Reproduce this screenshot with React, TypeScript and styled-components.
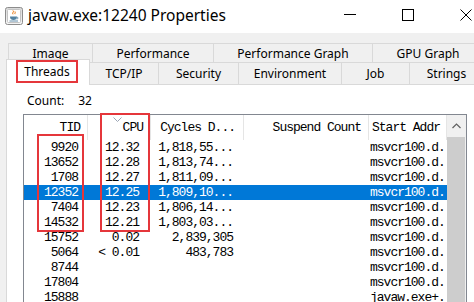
import React from "react";
import styled, { createGlobalStyle, css } from "styled-components";

const Global = createGlobalStyle`
  html, body { margin: 0; padding: 0; background: #f0f0f0; overflow: hidden; }
  body { width: 474px; height: 302px; }
`;

const Window = styled.div`
  width: 474px;
  height: 302px;
  overflow: hidden;
  background: #f0f0f0;
  font-family: "Noto Sans", "Open Sans", sans-serif;
  color: #000;
  display: flex;
  flex-direction: column;
`;

const TitleBar = styled.div`
  height: 33px;
  flex-shrink: 0;
  background: #fff;
  display: flex;
  align-items: flex-start;
`;

const AppIcon = styled.svg`
  width: 18px;
  height: 18px;
  margin: 7px 0 0 5px;
  flex-shrink: 0;
`;

const Title = styled.div`
  flex: 1;
  margin-left: 5px;
  font-size: 15.5px;
  line-height: 30px;
  white-space: nowrap;
`;

const Controls = styled.div`
  display: flex;
  flex-shrink: 0;
  margin-right: -21px;
`;

const ControlButton = styled.div`
  width: 58px;
  height: 30px;
  display: flex;
  align-items: center;
  justify-content: center;
`;

const TabArea = styled.div`
  padding-top: 10px;
  display: flex;
  flex-direction: column;
  width: 500px;
  flex-shrink: 0;
`;

const TabRow = styled.div<{ $h: number; $indent: number }>`
  display: flex;
  height: ${(p) => p.$h}px;
  padding-left: ${(p) => p.$indent}px;
`;

const Tab = styled.div<{ $w: number; $active?: boolean }>`
  width: ${(p) => p.$w}px;
  flex-shrink: 0;
  box-sizing: border-box;
  border: 1px solid #d9d9d9;
  border-bottom: none;
  margin-right: -1px;
  background: #f0f0f0;
  display: flex;
  align-items: center;
  justify-content: center;
  font-size: 12px;
  white-space: nowrap;
  ${(p) =>
    p.$active &&
    css`
      background: #fff;
      margin-top: -3px;
      margin-bottom: -1px;
      z-index: 2;
      align-items: flex-start;
      padding-right: 2px;
    `}
`;

const MarkedLabel = styled.span`
  box-sizing: border-box;
  width: 62px;
  height: 23px;
  border: 2px solid #e5363b;
  display: flex;
  align-items: center;
  justify-content: center;
`;

const Panel = styled.div`
  flex: 1;
  margin-left: 6px;
  background: #fff;
  border-top: 1px solid #d9d9d9;
  border-left: 1px solid #d9d9d9;
  display: flex;
  flex-direction: column;
  width: 480px;
`;

const CountRow = styled.div`
  margin: 8px 0 0 20px;
  height: 16px;
  line-height: 16px;
  font-size: 12px;
  display: flex;
`;

const CountValue = styled.span`
  margin-left: 14px;
`;

const List = styled.div`
  position: relative;
  margin: 5px 0 0 16px;
  width: 444px;
  box-sizing: border-box;
  flex: 1;
  border: 1px solid #828790;
  border-bottom: none;
  display: flex;
  font-family: "Liberation Mono", "DejaVu Sans Mono", monospace;
  font-size: 13px;
  letter-spacing: -1px;
`;

const Table = styled.div`
  width: 423px;
  display: flex;
  flex-direction: column;
`;

const HeaderRow = styled.div`
  display: flex;
  height: 25px;
`;

type Align = "left" | "right";

const HeaderCell = styled.div<{ $w: number; $align: Align; $pad: number }>`
  position: relative;
  box-sizing: border-box;
  width: ${(p) => p.$w}px;
  flex-shrink: 0;
  border-right: 1px solid #e5e5e5;
  line-height: 25px;
  white-space: nowrap;
  overflow: hidden;
  text-align: ${(p) => p.$align};
  ${(p) =>
    p.$align === "right"
      ? css`padding-right: ${p.$pad}px;`
      : css`padding-left: ${p.$pad}px;`}
`;

const SortMark = styled.svg`
  position: absolute;
  left: 25px;
  top: 2px;
  width: 9px;
  height: 5px;
`;

const Row = styled.div<{ $selected?: boolean }>`
  display: flex;
  height: 15px;
  line-height: 15px;
  background: ${(p) => (p.$selected ? "#0078d7" : "transparent")};
  color: ${(p) => (p.$selected ? "#fff" : "#000")};
`;

const Cell = styled.div<{ $w: number; $align: Align; $pad: number }>`
  box-sizing: border-box;
  width: ${(p) => p.$w}px;
  flex-shrink: 0;
  white-space: nowrap;
  overflow: hidden;
  text-align: ${(p) => p.$align};
  ${(p) =>
    p.$align === "right"
      ? css`padding-right: ${p.$pad}px;`
      : css`padding-left: ${p.$pad}px;`}
`;

const ScrollBar = styled.div`
  width: 19px;
  background: #f0f0f0;
  display: flex;
  flex-direction: column;
`;

const ScrollUp = styled.div`
  height: 22px;
  display: flex;
  align-items: center;
  justify-content: center;
  padding-right: 1px;
`;

const ScrollThumb = styled.div`
  flex: 1;
  background: #cdcdcd;
  margin-right: 1px;
`;

const Highlight = styled.div<{ $l: number; $t: number; $w: number; $h: number }>`
  position: absolute;
  box-sizing: border-box;
  left: ${(p) => p.$l}px;
  top: ${(p) => p.$t}px;
  width: ${(p) => p.$w}px;
  height: ${(p) => p.$h}px;
  border: 2px solid #e5363b;
  pointer-events: none;
  z-index: 3;
`;

type Col = { key: string; label: string; w: number; align: Align; hp: number; cp: number };

const columns: Col[] = [
  { key: "tid", label: "TID", w: 64, align: "right", hp: 7, cp: 10 },
  { key: "cpu", label: "CPU", w: 63, align: "right", hp: 7, cp: 12 },
  { key: "cycles", label: "Cycles D...", w: 93, align: "right", hp: 8, cp: 11 },
  { key: "suspend", label: "Suspend Count", w: 125, align: "right", hp: 7, cp: 11 },
  { key: "start", label: "Start Addr", w: 78, align: "left", hp: 3, cp: 1 },
];

type Thread = { tid: string; cpu: string; cycles: string; suspend: string; start: string; selected?: boolean };

const threads: Thread[] = [
  { tid: "9920", cpu: "12.32", cycles: "1,818,55...", suspend: "", start: "msvcr100.d." },
  { tid: "13652", cpu: "12.28", cycles: "1,813,74...", suspend: "", start: "msvcr100.d." },
  { tid: "1708", cpu: "12.27", cycles: "1,811,09...", suspend: "", start: "msvcr100.d." },
  { tid: "12352", cpu: "12.25", cycles: "1,809,10...", suspend: "", start: "msvcr100.d.", selected: true },
  { tid: "7404", cpu: "12.23", cycles: "1,806,14...", suspend: "", start: "msvcr100.d." },
  { tid: "14532", cpu: "12.21", cycles: "1,803,03...", suspend: "", start: "msvcr100.d." },
  { tid: "15752", cpu: "0.02", cycles: "2,839,305", suspend: "", start: "msvcr100.d." },
  { tid: "5064", cpu: "< 0.01", cycles: "483,783", suspend: "", start: "msvcr100.d." },
  { tid: "8744", cpu: "", cycles: "", suspend: "", start: "msvcr100.d." },
  { tid: "17804", cpu: "", cycles: "", suspend: "", start: "msvcr100.d." },
  { tid: "15888", cpu: "", cycles: "", suspend: "", start: "javaw.exe+." },
];

const topTabs = [
  { label: "Image", w: 85 },
  { label: "Performance", w: 122 },
  { label: "Performance Graph", w: 160 },
  { label: "GPU Graph", w: 112 },
];

const bottomTabs = [
  { label: "Threads", w: 84, active: true },
  { label: "TCP/IP", w: 70 },
  { label: "Security", w: 81 },
  { label: "Environment", w: 104 },
  { label: "Job", w: 69 },
  { label: "Strings", w: 75 },
];

const JavaIcon = () => (
  <AppIcon viewBox="0 0 18 18">
    <defs>
      <linearGradient id="frame" x1="0" y1="0" x2="0" y2="1">
        <stop offset="0" stopColor="#d8d8d8" />
        <stop offset="1" stopColor="#f6f6f6" />
      </linearGradient>
    </defs>
    <rect x="0.5" y="0.5" width="17" height="17" rx="2" fill="url(#frame)" stroke="#8c8c8c" />
    <rect x="2.5" y="2.5" width="13" height="13" rx="1" fill="#fff" stroke="#c4c4c4" />
    <path d="M8 3.5c1.5 1.3-1.3 2.2 0 3.8M10 4.5c1 .9-.8 1.5.2 2.6" stroke="#e76f00" strokeWidth="1" fill="none" />
    <path d="M5 9.5h7c0 2.6-1.4 3.5-3.5 3.5S5 12.1 5 9.5z" fill="#5382a1" />
    <path d="M12 10.2c1.4 0 1.4 1.8-.4 1.8" stroke="#5382a1" strokeWidth="0.9" fill="none" />
    <path d="M4.5 14h8.5" stroke="#5382a1" strokeWidth="0.9" />
  </AppIcon>
);

export default function App() {
  return (
    <>
      <Global />
      <Window>
        <TitleBar>
          <JavaIcon />
          <Title>javaw.exe:12240 Properties</Title>
          <Controls>
            <ControlButton>
              <svg width="12" height="2" viewBox="0 0 12 2">
                <path d="M0 0.5h12" stroke="#000" strokeWidth="1" />
              </svg>
            </ControlButton>
            <ControlButton>
              <svg width="12" height="12" viewBox="0 0 12 12">
                <rect x="0.5" y="0.5" width="11" height="11" fill="none" stroke="#000" strokeWidth="1" />
              </svg>
            </ControlButton>
            <ControlButton>
              <svg width="12" height="12" viewBox="0 0 12 12">
                <path d="M0.5 0.5l11 11M11.5 0.5l-11 11" stroke="#000" strokeWidth="1" />
              </svg>
            </ControlButton>
          </Controls>
        </TitleBar>

        <TabArea>
          <TabRow $h={19} $indent={8}>
            {topTabs.map((t) => (
              <Tab key={t.label} $w={t.w}>
                {t.label}
              </Tab>
            ))}
          </TabRow>
          <TabRow $h={22} $indent={6}>
            {bottomTabs.map((t) => (
              <Tab key={t.label} $w={t.w} $active={t.active}>
                {t.active ? <MarkedLabel>{t.label}</MarkedLabel> : t.label}
              </Tab>
            ))}
          </TabRow>
        </TabArea>

        <Panel>
          <CountRow>
            Count:<CountValue>32</CountValue>
          </CountRow>
          <List>
            <Table>
              <HeaderRow>
                {columns.map((c) => (
                  <HeaderCell key={c.key} $w={c.w} $align={c.align} $pad={c.hp}>
                    {c.key === "cpu" && (
                      <SortMark viewBox="0 0 9 5">
                        <path d="M0.5 0.5l4 4 4-4" stroke="#9aa4b4" strokeWidth="1" fill="none" />
                      </SortMark>
                    )}
                    {c.label}
                  </HeaderCell>
                ))}
              </HeaderRow>
              {threads.map((t) => (
                <Row key={t.tid} $selected={t.selected}>
                  {columns.map((c) => (
                    <Cell key={c.key} $w={c.w} $align={c.align} $pad={c.cp}>
                      {t[c.key as keyof Thread] as string}
                    </Cell>
                  ))}
                </Row>
              ))}
            </Table>
            <ScrollBar>
              <ScrollUp>
                <svg width="9" height="6" viewBox="0 0 9 6">
                  <path d="M0.5 5l4-4 4 4" stroke="#606060" strokeWidth="1.2" fill="none" />
                </svg>
              </ScrollUp>
              <ScrollThumb />
            </ScrollBar>
            <Highlight $l={13} $t={19} $w={47} $h={98} />
            <Highlight $l={76} $t={-2} $w={50} $h={119} />
          </List>
        </Panel>
      </Window>
    </>
  );
}
